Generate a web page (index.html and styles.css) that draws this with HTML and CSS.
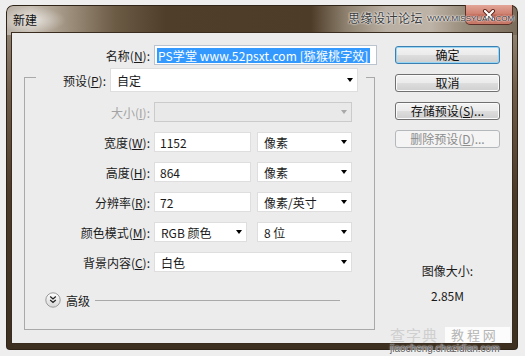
FILE: index.html
```html
<!DOCTYPE html>
<html lang="zh-CN">
<head>
    <meta charset="UTF-8">
    <title>新建</title>
    <link rel="stylesheet" href="styles.css">
</head>
<body>
    <div class="window">
        <div class="titlebar">
            <span class="title">新建</span>
            <button type="button" class="close-btn">
                <svg width="14" height="12" viewBox="0 0 14 12">
                    <path d="M3 2 L11 10 M11 2 L3 10" stroke="#5a2418" stroke-width="4" stroke-linecap="round"/>
                    <path d="M3 2 L11 10 M11 2 L3 10" stroke="#fff" stroke-width="2.2" stroke-linecap="round"/>
                </svg>
            </button>
        </div>
        <!-- 论坛水印 -->
        <span class="mark-cn">思缘设计论坛</span>
        <span class="mark-en">WWW.MISSYUAN.COM</span>

        <div class="client">
            <div class="form-area">
                <div class="name-row">
                    <label class="lbl">名称(<u>N</u>):</label>
                    <div class="field name-input"><span class="selected">PS学堂 www.52psxt.com [猕猴桃字效]</span></div>
                </div>

                <fieldset class="group">
                    <legend>
                        <div class="preset-row">
                            <label class="preset-lbl">预设(<u>P</u>):</label>
                            <div class="field select preset">自定<i class="arrow"></i></div>
                        </div>
                    </legend>

                    <div class="row disabled">
                        <label class="lbl">大小(<u>I</u>):</label>
                        <div class="field select w-full"><i class="arrow"></i></div>
                    </div>
                    <div class="row">
                        <label class="lbl">宽度(<u>W</u>):</label>
                        <div class="field w-num">1152</div>
                        <div class="field select w-unit">像素<i class="arrow"></i></div>
                    </div>
                    <div class="row">
                        <label class="lbl">高度(<u>H</u>):</label>
                        <div class="field w-num">864</div>
                        <div class="field select w-unit">像素<i class="arrow"></i></div>
                    </div>
                    <div class="row">
                        <label class="lbl">分辨率(<u>R</u>):</label>
                        <div class="field w-num">72</div>
                        <div class="field select w-unit">像素/英寸<i class="arrow"></i></div>
                    </div>
                    <div class="row">
                        <label class="lbl">颜色模式(<u>M</u>):</label>
                        <div class="field select w-mode">RGB 颜色<i class="arrow"></i></div>
                        <div class="field select w-unit wide-gap">8 位<i class="arrow"></i></div>
                    </div>
                    <div class="row">
                        <label class="lbl">背景内容(<u>C</u>):</label>
                        <div class="field select w-full">白色<i class="arrow"></i></div>
                    </div>

                    <div class="adv">
                        <svg class="adv-btn" width="16" height="16" viewBox="0 0 16 16">
                            <defs>
                                <linearGradient id="advg" x1="0" y1="0" x2="0" y2="1">
                                    <stop offset="0" stop-color="#ffffff"/>
                                    <stop offset="1" stop-color="#d6d6d6"/>
                                </linearGradient>
                            </defs>
                            <circle cx="8" cy="8" r="7.2" fill="url(#advg)" stroke="#9a9a9a" stroke-width="1"/>
                            <path d="M5.2 4.6 L8 7 L10.8 4.6 M5.2 8 L8 10.4 L10.8 8" fill="none" stroke="#222" stroke-width="1.3"/>
                        </svg>
                        <span class="adv-text">高级</span>
                        <span class="adv-line"></span>
                    </div>
                </fieldset>
            </div>

            <div class="side">
                <button type="button" class="btn default">确定</button>
                <button type="button" class="btn">取消</button>
                <button type="button" class="btn">存储预设(<u>S</u>)...</button>
                <button type="button" class="btn" disabled>删除预设(<u>D</u>)...</button>

                <div class="size-info">
                    <div>图像大小:</div>
                    <div class="size-val">2.85M</div>
                </div>
            </div>
        </div>

        <!-- 底部水印 -->
        <span class="mark-czd">查字典</span>
        <span class="mark-jc">教 程 网</span>
        <span class="mark-url">jiaocheng.chazidian.com</span>
    </div>
</body>
</html>
```

FILE: styles.css
```css
/* 基本样式 */
* { box-sizing: border-box; }
body { margin: 0; padding: 5px 7px 6px 6px; background: #eeeeee; font-family: "Noto Sans CJK SC", "Liberation Sans", sans-serif; font-size: 12px; color: #1a1a1a; }
u { text-decoration: underline; text-underline-offset: 1px; }

/* 窗口外框 */
.window {
    position: relative; width: 512px; height: 345px; display: flex; flex-direction: column;
    border-radius: 7px 7px 4px 4px; box-shadow: inset 0 0 0 1px #2e2418;
    background:
        radial-gradient(ellipse 34px 13px at 26px 15px, rgba(255,255,255,.6), rgba(255,255,255,0)) no-repeat,
        linear-gradient(90deg, #bab1a6 0, #c6beb3 25px, #a59886 55px, #6b5a44 110px, #4f3e2a 160px, #4d3c28 305px, #8d806e 340px, #b9afa2 380px, #bdb3a6 425px, #988c7b 458px, #7a6c5a 512px) top / 100% 30px no-repeat,
        linear-gradient(180deg, #a09486 0, #6e5d48 25%, #4a3a27 55%, #3d3021 100%);
}
.titlebar { height: 28px; display: flex; align-items: flex-start; padding-left: 7px; flex-shrink: 0; }
.title { padding-top: 7px; line-height: 16px; color: #111; }
.close-btn {
    margin-left: auto; margin-right: 5px; width: 48px; height: 20px; padding: 0; display: flex; align-items: center; justify-content: center;
    border: 1px solid #5c3026; border-top: none; border-radius: 0 0 5px 5px;
    background: linear-gradient(180deg, #e2a597 0, #cf8272 45%, #bd5f4d 55%, #c97a69 100%);
}

/* 水印 */
.mark-cn { position: absolute; left: 342px; top: 5px; font-size: 12px; line-height: 16px; color: #3b3b3b; letter-spacing: 0.5px; text-shadow: 0 0 2px #fff, 0 0 2px #fff; }
.mark-en { position: absolute; left: 421px; top: 9px; font-family: "Liberation Sans", sans-serif; font-size: 8px; line-height: 10px; color: #2e2e2e; text-shadow: 0 0 2px #fff, 0 0 2px #fff, 0 0 1px #fff; }
.mark-czd { position: absolute; left: 384px; top: 322px; font-size: 15px; line-height: 16px; color: #cfcfcf; letter-spacing: 1px; }
.mark-jc { position: absolute; left: 439px; top: 322px; width: 65px; height: 16px; line-height: 16px; padding-left: 6px; background: rgba(255,255,255,.85); color: #b5b5b5; font-size: 13px; }
.mark-url { position: absolute; left: 384px; top: 339px; font-family: "Liberation Sans", sans-serif; font-size: 10px; line-height: 10px; color: #5a5a5a; text-shadow: 0 0 2px #fff, 0 0 1px #fff; }

/* 客户区 */
.client { flex: 1; margin: 0 6px 7px; display: flex; background: #ececec; box-shadow: 0 0 0 1px #3a2d1f; }
.form-area { width: 383px; padding: 12px 0 0 12px; }

.lbl { width: 125px; margin-right: 4px; text-align: right; white-space: nowrap; }
.field { height: 20px; background: #fff; border: 1px solid #dedede; display: flex; align-items: center; padding-left: 5px; white-space: nowrap; }
.select { padding-left: 6px; }
.arrow { margin-left: auto; margin-right: 4px; width: 0; height: 0; border-left: 3.5px solid transparent; border-right: 3.5px solid transparent; border-top: 4px solid #000; }

.name-row { display: flex; align-items: center; height: 20px; }
.name-row .lbl { width: 126px; }
.name-input { width: 223px; border-color: #b9c4d0; padding-left: 2px; }
.selected { background: #3399ff; color: #fff; line-height: 15px; padding: 0 1px; letter-spacing: 0.1px; }

/* 分组框 */
.group { width: 351px; min-width: 0; margin: -3px 0 0; padding: 10px 0 21px; border: 1px solid #a9a9a9; }
.group legend { margin-left: 11px; padding: 6px 8px 0 0; }
.preset-row { display: flex; align-items: center; }
.preset-lbl { width: 70px; margin-right: 4px; text-align: right; }
.preset { width: 248px; height: 24px; }

.row { display: flex; align-items: center; height: 20px; margin-bottom: 10px; }
.w-full { width: 198px; }
.w-num { width: 97px; }
.w-unit { width: 95px; margin-left: 6px; }
.w-mode { width: 93px; }
.w-unit.wide-gap { margin-left: 10px; }
.row.disabled .lbl { color: #a3a3a3; }
.row.disabled .field { background: #e9e9e9; border-color: #cbcbcb; }
.row.disabled .arrow { border-top-color: #a8a8a8; }

.adv { display: flex; align-items: center; height: 16px; margin: 20px 0 0 20px; }
.adv-text { margin-left: 5px; }
.adv-line { margin-left: 5px; width: 245px; height: 1px; background: #a9a9a9; }

/* 右侧按钮 */
.side { width: 105px; padding-top: 13px; padding-bottom: 39px; display: flex; flex-direction: column; }
.btn {
    height: 18px; margin: 0 0 10px; padding: 0; font-family: inherit; font-size: 12px; line-height: 16px; color: #111;
    border: 1px solid #707070; border-radius: 3px; box-shadow: inset 0 0 0 1px #fbfbfb;
    background: linear-gradient(180deg, #f3f3f3 0, #ebebeb 48%, #dddddd 52%, #cfcfcf 100%);
}
.btn.default { border-color: #3c7fb1; box-shadow: inset 0 0 0 1px #97d6f4; }
.btn:disabled { border-color: #b4b8bb; background: #f4f4f4; color: #8c8c8c; box-shadow: none; }
.size-info { margin-top: auto; text-align: center; line-height: 16px; }
.size-val { margin-top: 9px; }
```
